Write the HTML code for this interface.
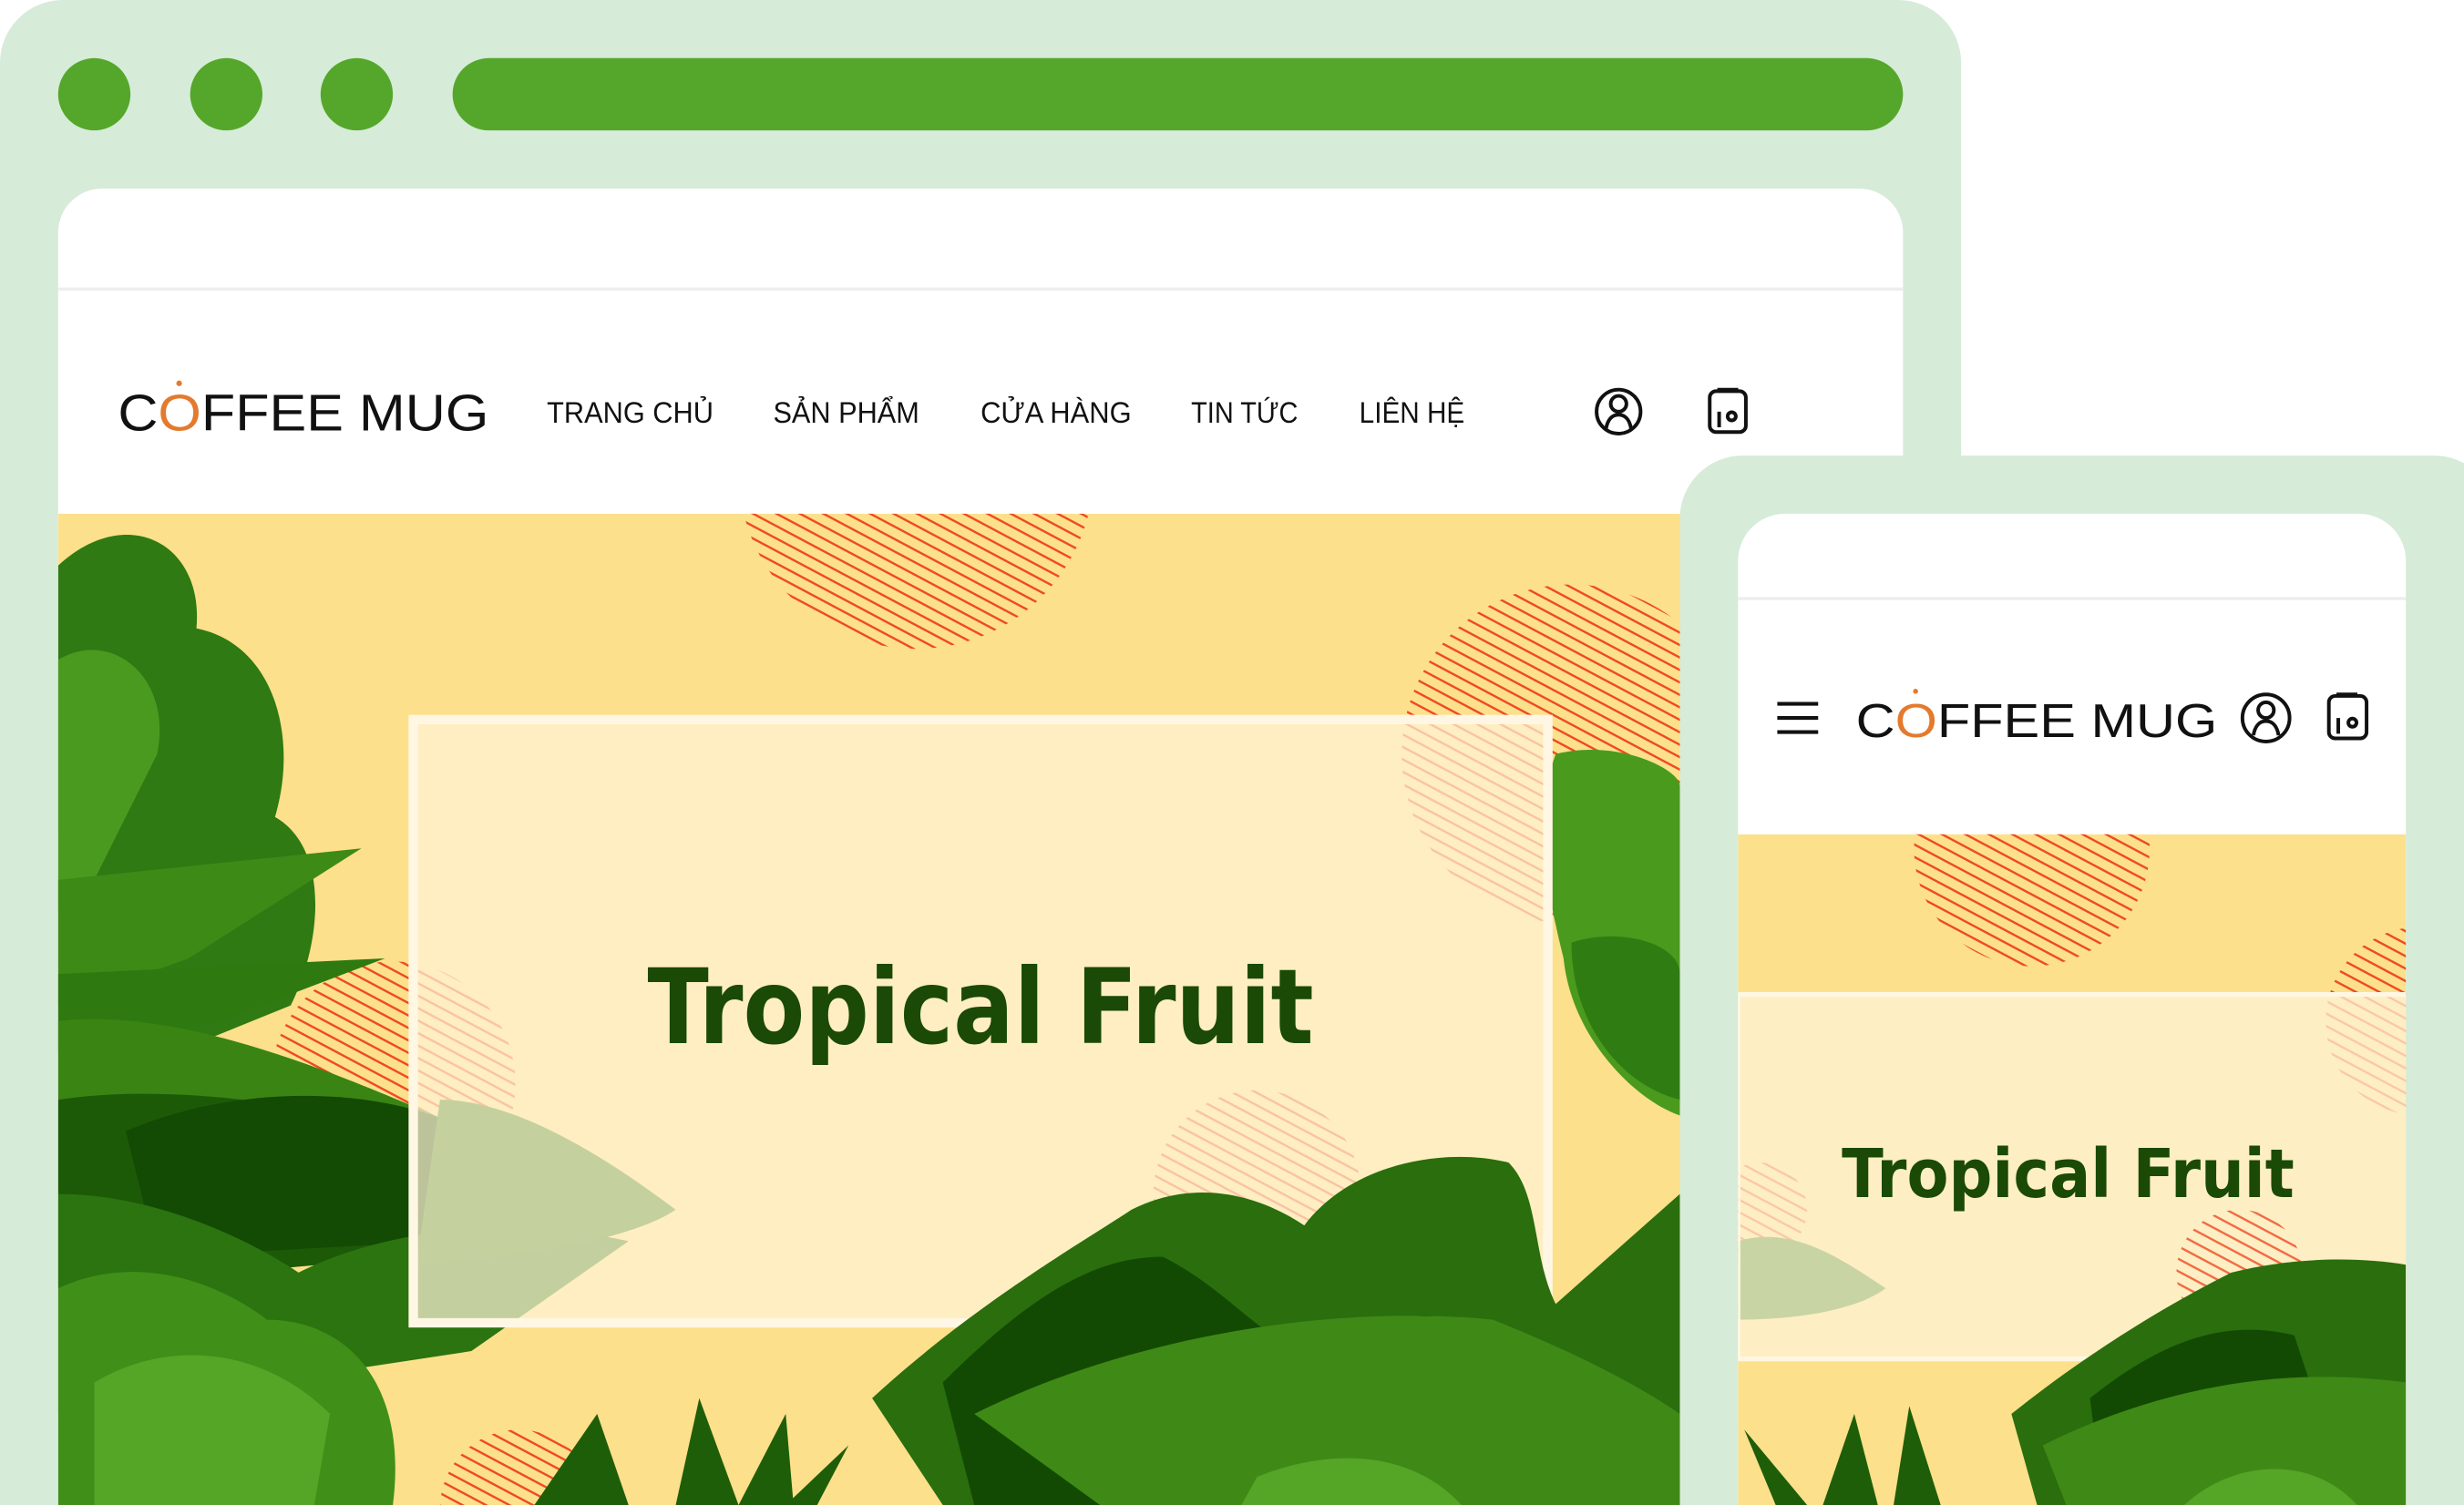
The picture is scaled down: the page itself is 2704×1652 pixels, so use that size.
<!DOCTYPE html>
<html><head><meta charset="utf-8"><style>html,body{margin:0;padding:0;background:#fff;width:2704px;height:1652px;overflow:hidden}svg{display:block}</style></head>
<body>
<svg width="2704" height="1652" viewBox="0 0 2704 1652" xmlns="http://www.w3.org/2000/svg">
<defs>
<pattern id="st" patternUnits="userSpaceOnUse" width="7" height="7" patternTransform="rotate(28)"><rect width="7" height="7" fill="none"/><rect y="0" width="7" height="1.4" fill="#ef4a24"/></pattern>
<clipPath id="dh"><rect x="37" y="327" width="1174" height="631"/></clipPath>
<clipPath id="mh"><rect x="1106" y="531" width="425" height="427"/></clipPath>
<clipPath id="all"><rect x="0" y="0" width="1568" height="958"/></clipPath>
</defs>
<g transform="scale(1.72449)" clip-path="url(#all)">
<rect x="0" y="0" width="1248" height="1000" rx="40" fill="#d6ebd8"/>
<circle cx="60" cy="60" r="23" fill="#55a72b"/><circle cx="144" cy="60" r="23" fill="#55a72b"/><circle cx="227" cy="60" r="23" fill="#55a72b"/>
<rect x="288" y="37" width="923" height="46" rx="23" fill="#55a72b"/>
<rect x="37" y="120" width="1174" height="900" rx="28" fill="#fff"/>
<rect x="37" y="183" width="1174" height="2" fill="#eeeeee"/>
<text x="75" y="274" font-family="Liberation Sans, sans-serif" font-size="33" textLength="236" lengthAdjust="spacingAndGlyphs" fill="#111">C<tspan fill="#e47a2e">O</tspan>FFEE MUG</text>
<circle cx="114" cy="244" r="1.8" fill="#e47a2e"/>
<g font-family="Liberation Sans, sans-serif" font-size="19" fill="#111">
<text x="348" y="269" textLength="106" lengthAdjust="spacingAndGlyphs">TRANG CHỦ</text>
<text x="492" y="269" textLength="93" lengthAdjust="spacingAndGlyphs">SẢN PHẨM</text>
<text x="624" y="269" textLength="96" lengthAdjust="spacingAndGlyphs">CỬA HÀNG</text>
<text x="758" y="269" textLength="68" lengthAdjust="spacingAndGlyphs">TIN TỨC</text>
<text x="865" y="269" textLength="67" lengthAdjust="spacingAndGlyphs">LIÊN HỆ</text>
</g>
<g fill="none" stroke="#111" stroke-width="2.3">
<circle cx="1030" cy="262" r="14"/><circle cx="1030" cy="257" r="5"/><path d="M1022 273c1-6 4-9 8-9s7 3 8 9"/>
<rect x="1088" y="249" width="23" height="26" rx="4"/><path d="M1094 249v-1h11v1M1094 262v10"/><circle cx="1102" cy="265" r="2.6"/>
</g>
<g clip-path="url(#dh)">
<rect x="37" y="327" width="1174" height="640" fill="#fde08b"/>
<circle cx="583" cy="300" r="113" fill="url(#st)"/>
<circle cx="1000" cy="480" r="108" fill="url(#st)"/>
<circle cx="250" cy="690" r="78" fill="url(#st)"/>
<circle cx="800" cy="760" r="66" fill="url(#st)"/>
<circle cx="330" cy="960" r="50" fill="url(#st)"/>
<path d="M37 360C80 320 130 345 125 400C175 410 190 470 175 520C210 540 205 600 185 640L37 700Z" fill="#2f7a12"/>
<path d="M37 420C70 400 110 430 100 480L60 560L37 580Z" fill="#4b9a20"/>
<path d="M37 560L230 540L120 610L37 640Z" fill="#3e8a16"/>
<path d="M37 620L245 610L140 650L37 670Z" fill="#2e7a10"/>
<path d="M37 650C120 640 230 690 300 720L37 760Z" fill="#3a8414"/>
<path d="M37 700C100 690 200 700 300 730L260 800L37 820Z" fill="#1c5a07"/>
<path d="M80 720C150 690 240 690 300 720L280 790L100 800Z" fill="#134a04"/>
<path d="M37 760C100 760 160 790 190 810C250 780 330 775 400 790L300 860L37 900Z" fill="#2b7410"/>
<path d="M37 820C80 800 130 810 170 840C220 840 260 880 250 958L37 958Z" fill="#3f8f18"/>
<path d="M60 880C110 850 170 860 210 900L200 958L60 958Z" fill="#55a526"/>
<path d="M280 700C330 700 390 740 430 770C400 790 330 800 265 805Z" fill="#2f7a12"/>
<path d="M990 480C1030 470 1069 490 1069 500L1069 710C1040 700 1000 660 995 610C985 570 975 520 990 480Z" fill="#4a9a1e"/>
<path d="M1000 600C1030 590 1069 600 1069 620L1069 700C1030 690 1000 650 1000 600Z" fill="#2f7d12"/>
</g>
<rect x="263" y="458" width="722" height="384" fill="#fef3d6" fill-opacity="0.72" stroke="#fff7e4" stroke-width="6"/>
<text x="624" y="664" text-anchor="middle" font-family="DejaVu Sans, sans-serif" font-weight="bold" font-size="66" textLength="424" lengthAdjust="spacingAndGlyphs" fill="#1a4a05">Tropical Fruit</text>
<g clip-path="url(#dh)">
<path d="M555 890C620 830 690 790 720 770C760 750 800 760 830 780C860 740 920 730 960 740C980 760 975 800 990 830L1069 760L1069 958L600 958Z" fill="#2a6e0e"/>
<path d="M600 880C660 820 700 800 740 800C780 820 800 850 830 860C860 850 900 830 920 840L980 958L620 958Z" fill="#134a03"/>
<path d="M620 900C720 850 850 830 950 840C1000 860 1040 880 1069 900L1069 958L700 958Z" fill="#3f8a16"/>
<path d="M800 940C850 920 900 925 930 958L790 958Z" fill="#55a526"/>
<path d="M340 958L380 900L400 958ZM430 958L445 890L470 958ZM470 958L500 900L505 958ZM500 958L540 920L520 958Z" fill="#1f5e08"/>
</g>
<rect x="1069" y="290" width="520" height="720" rx="40" fill="#d6ebd8"/>
<rect x="1106" y="327" width="425" height="700" rx="30" fill="#fff"/>
<rect x="1106" y="380" width="425" height="2" fill="#eeeeee"/>
<g stroke="#111" stroke-width="2.4"><path d="M1131 448h26M1131 457h26M1131 466h26"/></g>
<text x="1181" y="469" font-family="Liberation Sans, sans-serif" font-size="30" textLength="230" lengthAdjust="spacingAndGlyphs" fill="#111">C<tspan fill="#e47a2e">O</tspan>FFEE MUG</text>
<circle cx="1219" cy="440" r="1.6" fill="#e47a2e"/>
<g fill="none" stroke="#111" stroke-width="2.3">
<circle cx="1442" cy="457" r="15"/><circle cx="1442" cy="452" r="5"/><path d="M1434 468c1-6 4-9 8-9s7 3 8 9"/>
<rect x="1482" y="443" width="24" height="27" rx="4"/><path d="M1488 443v-1h11v1M1488 457v10"/><circle cx="1497" cy="460" r="2.6"/>
</g>
<g clip-path="url(#mh)">
<rect x="1106" y="531" width="425" height="440" fill="#fde08b"/>
<circle cx="1293" cy="540" r="75" fill="url(#st)"/>
<circle cx="1540" cy="650" r="60" fill="url(#st)"/>
<circle cx="1120" cy="770" r="30" fill="url(#st)"/>
<path d="M1106 790C1140 780 1170 800 1200 820C1180 835 1140 840 1106 840Z" fill="#2f7a12"/>
<rect x="1106" y="633" width="430" height="232" fill="#fef3d6" fill-opacity="0.75" stroke="#fff7e4" stroke-width="3"/>
<circle cx="1425" cy="810" r="40" fill="url(#st)" opacity="0.8"/>
<text x="1316" y="762" text-anchor="middle" font-family="DejaVu Sans, sans-serif" font-weight="bold" font-size="43" textLength="288" lengthAdjust="spacingAndGlyphs" fill="#1a4a05">Tropical Fruit</text>
<path d="M1280 900C1330 860 1380 830 1420 810C1460 800 1500 800 1531 805L1531 971L1300 971Z" fill="#2a6e0e"/>
<path d="M1330 890C1380 850 1420 840 1460 850L1500 971L1340 971Z" fill="#134a03"/>
<path d="M1300 920C1380 880 1460 870 1531 880L1531 971L1320 971Z" fill="#3f8a16"/>
<path d="M1390 958C1420 930 1470 925 1500 958Z" fill="#55a526"/>
<path d="M1160 958L1180 900L1195 958ZM1205 958L1215 895L1235 958ZM1130 958L1110 910L1150 958Z" fill="#1f5e08"/>
</g>
</g>
</svg>
</body></html>
